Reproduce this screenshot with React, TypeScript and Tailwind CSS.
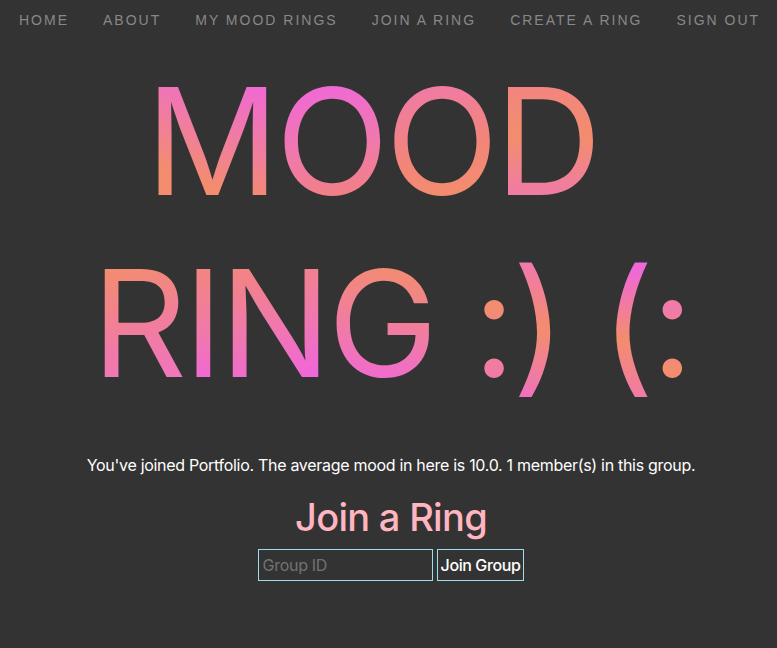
import React, {useState} from "react"

const navItems: string[] = ["Home", "About", "My Mood Rings", "Join a Ring", "Create a Ring", "Sign Out"]

interface Glyph {
  ch: string,
  bg: string,
}

// each letter carries its own little gradient (pink / orange / magenta)
const topLine: Glyph[] = [
  {ch: "M", bg: "bg-[linear-gradient(200deg,#f067d9_30px,#f07aa8_90px,#f38d6d_150px)]"},
  {ch: "O", bg: "bg-[linear-gradient(170deg,#f067d9_35px,#f07aa8_110px,#f2807f_160px)]"},
  {ch: "O", bg: "bg-[linear-gradient(165deg,#f07aa8_40px,#f2857a_110px,#f38d6d_160px)]"},
  {ch: "D", bg: "bg-[linear-gradient(180deg,#f2857f_35px,#f38d6d_85px,#f07aa8_145px)]"},
]

const bottomLine: Glyph[] = [
  {ch: "R", bg: "bg-[linear-gradient(165deg,#f38d6d_35px,#f07aa8_120px,#f077b8_150px)]"},
  {ch: "I", bg: "bg-[linear-gradient(180deg,#f2857f_35px,#f07aa8_95px,#f067d9_150px)]"},
  {ch: "N", bg: "bg-[linear-gradient(165deg,#f2857f_35px,#f07aa8_95px,#f067d9_160px)]"},
  {ch: "G", bg: "bg-[linear-gradient(190deg,#f38d6d_35px,#f07aa8_110px,#f06ccc_150px)]"},
  {ch: " ", bg: ""},
  {ch: ":", bg: "bg-[linear-gradient(180deg,#f38d6d_70px,#f07aa8_140px)]"},
  {ch: ")", bg: "bg-[linear-gradient(180deg,#f07aa8_35px,#f38d6d_95px,#f07aa8_145px,#f070c0_165px)]"},
  {ch: " ", bg: ""},
  {ch: "(", bg: "bg-[linear-gradient(180deg,#f067d9_35px,#f38d6d_105px,#f07aa8_165px)]"},
  {ch: ":", bg: "bg-[linear-gradient(180deg,#f07aa8_75px,#f38d6d_135px)]"},
]

function GradientLine({glyphs, className}: {glyphs: Glyph[], className?: string}) {
  return (
    <span className={`block ${className ?? ""}`}>
      {glyphs.map((g, i) => (
        <span key={i} className={`bg-clip-text text-transparent ${g.bg}`}>{g.ch}</span>
      ))}
    </span>
  )
}

export default function App() {
  const [groupId, setGroupId] = useState<string>("")

  return (
    <div className="min-h-screen bg-[#333333] font-['Inter',sans-serif] text-white">
      <nav className="flex h-10 items-center gap-[34px] pl-[19px]">
        {navItems.map((item) => (
          <a
            key={item}
            href="#"
            className="font-['Liberation_Sans',Arial,sans-serif] text-[14px] leading-4 uppercase tracking-[2px] text-[#888888]"
          >
            {item}
          </a>
        ))}
      </nav>

      <main className="flex flex-col items-center pl-[5px]">
        <h1 className="mt-[11px] w-full text-center text-[148px] leading-[182px] font-normal tracking-[-3.5px]">
          <GradientLine glyphs={topLine} className="pr-[38px]"/>
          <GradientLine glyphs={bottomLine}/>
        </h1>

        <p className="mt-[38px] text-[16px] leading-6 tracking-[-0.3px]">
          You've joined Portfolio. The average mood in here is 10.0. 1 member(s) in this group.
        </p>

        <h2 className="mt-[20px] text-[38px] leading-10 font-medium tracking-[-0.7px] text-[#ffb6c1]">Join a Ring</h2>

        <form
          className="mt-[12px] flex gap-1"
          onSubmit={(e: React.FormEvent) => e.preventDefault()}
        >
          <input
            type="text"
            value={groupId}
            onChange={(e) => setGroupId(e.target.value)}
            placeholder="Group ID"
            className="h-8 w-[175px] border border-[#a0dcef] bg-transparent px-1 text-[16px] tracking-[-0.3px] text-white outline-none placeholder:text-[#727272]"
          />
          <button
            type="submit"
            className="h-8 border border-[#a0dcef] bg-transparent px-[3px] text-[16px] font-medium tracking-[-0.4px] text-white"
          >
            Join Group
          </button>
        </form>
      </main>
    </div>
  )
}
